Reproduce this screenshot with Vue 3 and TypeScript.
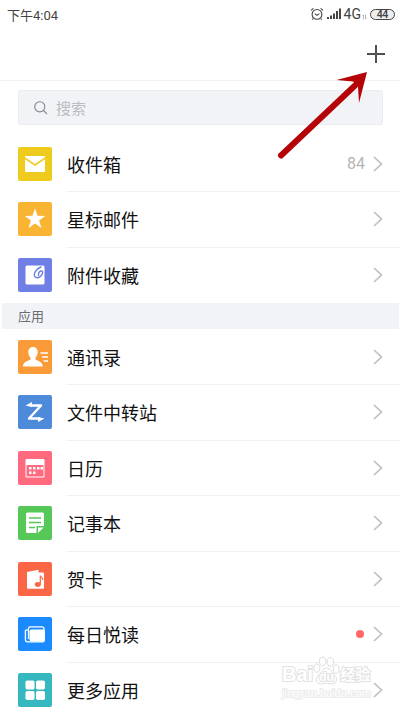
<script setup lang="ts">
interface Entry {
  id: string
  label: string
  color: string
  count?: number
  dot?: boolean
}

const mailboxes: Entry[] = [
  { id: 'inbox', label: '收件箱', color: '#efcb1e', count: 84 },
  { id: 'starred', label: '星标邮件', color: '#fab433' },
  { id: 'attachments', label: '附件收藏', color: '#6f7fe5' },
]

const apps: Entry[] = [
  { id: 'contacts', label: '通讯录', color: '#fb9a38' },
  { id: 'transfer', label: '文件中转站', color: '#4e8ada' },
  { id: 'calendar', label: '日历', color: '#ff6a7e' },
  { id: 'notes', label: '记事本', color: '#55c858' },
  { id: 'cards', label: '贺卡', color: '#fb6746' },
  { id: 'reading', label: '每日悦读', color: '#1b8aff', dot: true },
  { id: 'more', label: '更多应用', color: '#35b8c0' },
]

const groups: { title: string; items: Entry[] }[] = [
  { title: '', items: mailboxes },
  { title: '应用', items: apps },
]
</script>

<template>
  <div class="page">
    <div class="status">
      <span class="time">下午4:04</span>
      <div class="signals">
        <svg class="alarm" viewBox="0 0 14 14" aria-hidden="true">
          <circle cx="7" cy="7.4" r="4.9" />
          <path d="M4.8 6.6 7 8.4l2.4-1.8M1 3.4 3.4 1.3M13 3.4 10.6 1.3M3.2 11.5l-1 1.2M10.8 11.5l1 1.2" />
        </svg>
        <svg class="bars" viewBox="0 0 15 12" aria-hidden="true">
          <path d="M0 9h2v2H0zM3 7.500h2V11H3zM6 5.500h2V11H6zM9 3h2v8H9zM12 .5h2V11h-2z" />
        </svg>
        <span class="net">4G</span>
        <svg class="data" viewBox="0 0 5 6" aria-hidden="true">
          <path d="M1.500 5.500V1L.5 2M3.500.5V5l1-1" />
        </svg>
        <span class="battery">44</span>
      </div>
    </div>

    <header class="header">
      <button class="add" type="button" aria-label="添加">
        <svg viewBox="0 0 18 18" aria-hidden="true"><path d="M9 0v18M0 9h18" /></svg>
      </button>
    </header>

    <div class="search-wrap">
      <label class="search">
        <svg viewBox="0 0 15 15" aria-hidden="true"><circle cx="6.200" cy="6.200" r="5.400" /><path d="m10.200 10.200 3.800 3.800" /></svg>
        <input type="search" placeholder="搜索" aria-label="搜索" />
      </label>
    </div>

    <section v-for="group in groups" :key="group.title">
      <h2 v-if="group.title" class="title">{{ group.title }}</h2>
      <ul class="list">
        <li v-for="item in group.items" :key="item.id">
          <a class="row" :href="'#' + item.id">
            <svg class="icon" viewBox="0 0 34 34" aria-hidden="true">
              <rect width="34" height="34" rx="2" :fill="item.color" />
              <g v-if="item.id === 'inbox'" fill="#fff">
                <path d="M7 9h20v1.300l-10 6.700L7 10.300z" />
                <path d="M7 12.200 17 19l10-6.800V24q0 1-1 1H8q-1 0-1-1z" />
              </g>
              <path v-else-if="item.id === 'starred'" fill="#fff" d="m17 6.500 2.600 7.300 7.600.1-6.100 4.600 2.300 7.400-6.400-4.400-6.400 4.400 2.300-7.400-6.100-4.600 7.600-.1z" />
              <g v-else-if="item.id === 'attachments'">
                <rect x="7.500" y="7.500" width="19" height="19" rx="1.500" fill="#fff" />
                <path d="M23 9c-3 1.200-5.800 4-6.600 6.800-.7 3 1.300 4.500 4 3.700 2.800-.9 4.400-3.800 4.200-5.500-.3-1.800-2.700-1-3.500.4-.7 1.200-.8 2.200-.6 3" fill="none" :stroke="item.color" stroke-width="1.400" stroke-linecap="round" />
              </g>
              <g v-else-if="item.id === 'contacts'">
                <path fill="#fff" d="M15 7c3 0 4.700 2 4.700 5 0 2.500-1 4.500-2.200 5.600v2c2 1.200 7.200 2.400 7.200 6.900H5c0-4.500 5.500-5.700 7.500-6.900v-2c-1.200-1.100-2.200-3.100-2.200-5.600 0-3 1.700-5 4.700-5z" />
                <path d="M22.500 13H30M24 17h6M25.500 21H30" stroke="#fff" stroke-width="1.300" />
              </g>
              <g v-else-if="item.id === 'transfer'">
                <path d="M12 10.500h11L11 23.500h11" fill="none" stroke="#fff" stroke-width="2.400" stroke-linejoin="round" />
                <path fill="#fff" d="m7.500 10.500 6.500-3.500V12zM26.500 23.500 20 27v-5z" />
              </g>
              <g v-else-if="item.id === 'calendar'" fill="#fff">
                <path fill-rule="evenodd" d="M8.500 8h17q1 0 1 1v16.500q0 1-1 1h-17q-1 0-1-1V9q0-1 1-1zM8.500 14v11.500h17V14z" />
                <path d="M15 16h2.500v2.500H15zM19 16h2.500v2.500H19zM22.500 16H25v2.500h-2.500zM11 20.500h2.500V23H11zM15 20.500h2.500V23H15zM11 16h2.500v2.500H11z" />
              </g>
              <g v-else-if="item.id === 'notes'">
                <path fill="#fff" d="M9.500 6.500h15q1.500 0 1.500 1.500v12h-7.500v7h-9Q8 27 8 25.500V8q0-1.500 1.500-1.500zM20 21.500h5.500L20 27z" />
                <path d="M11 12h12M11 16.500h12M11 21.500h6" :stroke="item.color" stroke-width="1.300" />
              </g>
              <g v-else-if="item.id === 'cards'">
                <path fill="#fff" d="M10 10.500h15q1 0 1 1v14.200q0 1-1 1H10q-1 0-1-1V11.500q0-1 1-1z" />
                <path fill="#fff" d="m9 10 11.500-2.200v4L9 14z" />
                <ellipse cx="19.800" cy="22.500" rx="3" ry="2.400" :fill="item.color" />
                <path d="M22.300 22.500v-9c.3 2 3 2 2.500 4.500" fill="none" :stroke="item.color" stroke-width="1.200" />
              </g>
              <g v-else-if="item.id === 'reading'">
                <rect x="11.500" y="12.500" width="15.500" height="12" rx="2" fill="#fff" />
                <path d="M10.500 22V11.500q0-1.700 1.700-1.700H24q2 0 2 2V24q0 .8-1 .8H9.800q-2.400 0-2.400-2v-8.500q0-1.700 3-1.700" fill="none" stroke="#fff" stroke-width="1.300" />
              </g>
              <g v-else fill="#fff">
                <rect x="7.500" y="7.500" width="9" height="9" rx="1.800" /><rect x="18" y="7.500" width="9" height="9" rx="1.800" />
                <rect x="7.500" y="18" width="9" height="9" rx="1.800" /><rect x="18" y="18" width="9" height="9" rx="1.800" />
              </g>
            </svg>
            <span class="body">
              <span class="label">{{ item.label }}</span>
              <span v-if="item.count" class="count">{{ item.count }}</span>
              <span v-if="item.dot" class="dot"></span>
              <svg class="chevron" viewBox="0 0 10 16" aria-hidden="true"><path d="m1 1 7.500 7L1 15" /></svg>
            </span>
          </a>
        </li>
      </ul>
    </section>

    <svg class="pointer" viewBox="0 0 92 90" aria-hidden="true">
      <path d="M4 85.500 78 15.500" stroke="#b40407" stroke-width="6" stroke-linecap="round" />
      <path d="M90 2 59.500 10 76 11.500 81 17l1 16z" fill="#b40407" />
    </svg>

    <div class="watermark">
      <div class="brand">
        <span class="latin">Bai</span>
        <span class="paw">
          <svg viewBox="0 0 28 30" aria-hidden="true">
            <ellipse cx="4" cy="12" rx="3" ry="4.300" /><ellipse cx="10" cy="5" rx="3.300" ry="4.500" />
            <ellipse cx="18" cy="5.500" rx="3.300" ry="4.500" /><ellipse cx="24" cy="13" rx="3" ry="4.300" />
            <path d="M14 12c4 0 5 4 8 7 4 4 3 9-2 9.300-3 .2-4-.5-6-.5s-3 .7-6 .5c-5-.3-6-5.300-2-9.300 3-3 4-7 8-7z" />
          </svg>
          <span class="du">du</span>
        </span>
        <span class="han">经验</span>
      </div>
      <div class="site">jingyan.baidu.com</div>
    </div>
  </div>
</template>

<style>
html {
  scrollbar-width: none;
}
body {
  background: #fff;
}
</style>

<style scoped>
.page {
  position: relative;
  height: 100vh;
  overflow: hidden auto;
  scrollbar-width: none;
  background: #fff;
  color: #111;
  font-family: "Noto Sans CJK SC", sans-serif;
}
.status {
  display: flex;
  align-items: center;
  justify-content: space-between;
  height: 28px;
  padding: 0 5px 0 7px;
  color: #444;
  font-size: 12px;
}
.time {
  font-family: Roboto, "Noto Sans CJK SC", sans-serif;
  font-size: 13px;
}
.signals {
  display: flex;
  align-items: center;
}
.alarm {
  width: 14px;
  height: 14px;
  margin-right: 3px;
  fill: none;
  stroke: #444;
  stroke-width: 1.1;
}
.bars {
  width: 15px;
  height: 12px;
  margin-right: 2px;
  fill: #444;
}
.net {
  font-family: Roboto, sans-serif;
  font-size: 14px;
}
.data {
  width: 5px;
  height: 6px;
  margin: 5px 3px 0 1px;
  fill: none;
  stroke: #999;
  stroke-width: 0.7;
}
.battery {
  box-sizing: border-box;
  width: 25px;
  height: 11px;
  border: 1px solid #444;
  border-radius: 6px;
  background: #eee;
  font-family: "Liberation Sans", sans-serif;
  font-size: 10px;
  font-weight: 700;
  line-height: 9px;
  text-align: center;
}
.header {
  display: flex;
  align-items: center;
  justify-content: flex-end;
  height: 52px;
  padding-right: 15px;
  border-bottom: 1px solid #f2f2f2;
}
.add {
  display: flex;
  padding: 0;
  border: 0;
  background: none;
}
.add svg {
  width: 18px;
  height: 18px;
  fill: none;
  stroke: #505050;
  stroke-width: 2;
}
.search-wrap {
  padding: 9px 17px 11px 18px;
}
.search {
  display: flex;
  align-items: center;
  gap: 8px;
  box-sizing: border-box;
  height: 35px;
  padding: 0 15px;
  border: 1px solid #ebecef;
  border-radius: 2px;
  background: #f2f3f7;
}
.search svg {
  width: 14px;
  height: 14px;
  flex: none;
  fill: none;
  stroke: #858688;
  stroke-width: 1.2;
}
.search input {
  flex: 1;
  min-width: 0;
  padding: 0;
  border: 0;
  outline: 0;
  background: none;
  color: #333;
  font: 15px/20px "Noto Sans CJK SC", sans-serif;
}
.search input::placeholder {
  color: #bbbcbf;
}
.title {
  margin: 1px 1px 0 2px;
  padding-left: 16px;
  background: #f2f3f7;
  color: #6c6d70;
  font-size: 13px;
  font-weight: 400;
  line-height: 26px;
}
.list {
  margin: 0;
  padding: 0;
  list-style: none;
}
.row {
  display: flex;
  align-items: center;
  gap: 15px;
  height: 55px;
  padding-left: 18px;
  color: inherit;
  text-decoration: none;
}
li:nth-child(even) .row {
  height: 56px;
}
.icon {
  width: 34px;
  height: 34px;
  flex: none;
}
.body {
  display: flex;
  flex: 1;
  align-items: center;
  align-self: stretch;
  padding-right: 17px;
  box-shadow: 0 1px #f0f0f0;
}
li:last-child .body {
  box-shadow: none;
}
.label {
  flex: 1;
  font-size: 18px;
  line-height: 24px;
}
.count {
  margin-right: 8px;
  color: #b4b4b6;
  font-family: Roboto, sans-serif;
  font-size: 16px;
}
.dot {
  width: 8px;
  height: 8px;
  margin-right: 9px;
  border-radius: 50%;
  background: #ff6768;
}
.chevron {
  width: 10px;
  height: 16px;
  fill: none;
  stroke: #bfc0c4;
  stroke-width: 1.7;
}
.pointer {
  position: absolute;
  top: 70px;
  right: 31px;
  width: 92px;
  height: 90px;
  fill: none;
}
.watermark {
  position: absolute;
  top: 656px;
  right: 28px;
  width: 90px;
  color: #fff;
  font-family: "Liberation Sans", "Noto Sans CJK SC", sans-serif;
  pointer-events: none;
  paint-order: stroke fill;
  -webkit-text-stroke: 2px #e2e2e2;
}
.brand {
  display: flex;
  align-items: flex-end;
  height: 30px;
}
.latin {
  font-size: 20px;
  font-weight: 700;
  line-height: 24px;
}
.paw {
  display: grid;
  flex: none;
  width: 27px;
  height: 30px;
}
.paw > * {
  grid-area: 1 / 1;
}
.paw svg {
  width: 27px;
  height: 30px;
  fill: #fff;
  paint-order: normal;
  stroke: #dcdcdc;
  stroke-width: 1;
}
.du {
  align-self: end;
  font-size: 12px;
  font-weight: 700;
  line-height: 18px;
  text-align: center;
}
.han {
  font-size: 15px;
  font-weight: 700;
  line-height: 22px;
  white-space: nowrap;
}
.site {
  font-size: 11px;
  line-height: 14px;
  white-space: nowrap;
  -webkit-text-stroke-color: #ececec;
}
</style>
